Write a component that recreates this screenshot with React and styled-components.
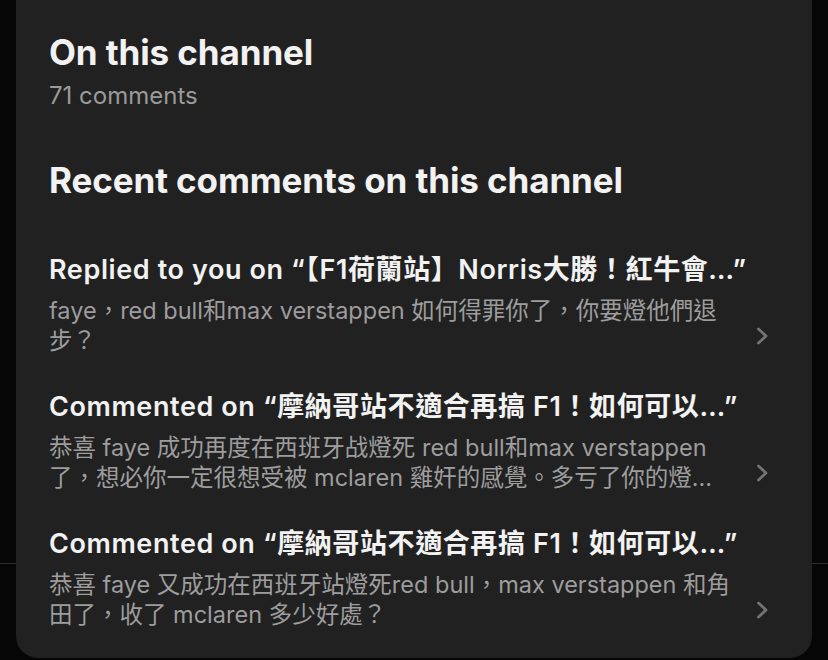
import styled, { createGlobalStyle } from "styled-components";

const GlobalStyle = createGlobalStyle`
  html, body {
    margin: 0;
    padding: 0;
    height: 100%;
    overflow: hidden;
  }
  body {
    background:
      linear-gradient(#2e2e2e, #2e2e2e) 0 563px / 100% 1px no-repeat,
      #060606;
    font-family: Inter, "Noto Sans CJK TC", sans-serif;
    -webkit-font-smoothing: antialiased;
  }
`;

const Sheet = styled.div`
  margin: 0 16px;
  height: 658px;
  box-sizing: border-box;
  background: #212121;
  border-radius: 0 0 22px 22px;
  padding: 32px 42px 0 33px;
  color: #f2f2f2;
`;

const Heading = styled.h2`
  margin: ${(p) => (p.$spaced ? "50px 0 0" : "0")};
  font-size: 35px;
  line-height: 40px;
  font-weight: 700;
  letter-spacing: -0.1px;
`;

const Count = styled.div`
  margin-top: 10px;
  font-size: 24px;
  line-height: 28px;
  color: #9a9a9a;
`;

const List = styled.div`
  margin-top: 54px;
  display: flex;
  flex-direction: column;
  gap: 35px;
`;

const Item = styled.div`
  display: flex;
  flex-direction: column;
  gap: 10px;
`;

const ItemTitle = styled.div`
  font-size: 27px;
  line-height: 32px;
  font-weight: 600;
  letter-spacing: 0.6px;
  white-space: nowrap;
  color: #f2f2f2;
`;

const BodyRow = styled.div`
  display: flex;
  align-items: flex-end;
  gap: 22px;
`;

const BodyText = styled.div`
  flex: 1;
  font-size: 23.5px;
  line-height: 30px;
  color: #9d9d9d;
  display: -webkit-box;
  -webkit-box-orient: vertical;
  -webkit-line-clamp: 2;
  overflow: hidden;
`;

const Chevron = styled.svg`
  flex: none;
  width: 15px;
  height: 20px;
  margin-bottom: 10px;
`;

const comments = [
  {
    title: "Replied to you on “【F1荷蘭站】Norris大勝！紅牛會…”",
    body: "faye，red bull和max verstappen 如何得罪你了，你要燈他們退步？",
  },
  {
    title: "Commented on “摩納哥站不適合再搞 F1！如何可以…”",
    body: "恭喜 faye 成功再度在西班牙战燈死 red bull和max verstappen 了，想必你一定很想受被 mclaren 雞奸的感覺。多亏了你的燈力，讓我們看到了一場精彩的比賽",
  },
  {
    title: "Commented on “摩納哥站不適合再搞 F1！如何可以…”",
    body: "恭喜 faye 又成功在西班牙站燈死red bull，max verstappen 和角田了，收了 mclaren 多少好處？",
  },
];

export default function App() {
  return (
    <>
      <GlobalStyle />
      <Sheet>
        <Heading>On this channel</Heading>
        <Count>71 comments</Count>
        <Heading $spaced>Recent comments on this channel</Heading>
        <List>
          {comments.map((c, i) => (
            <Item key={i}>
              <ItemTitle>{c.title}</ItemTitle>
              <BodyRow>
                <BodyText>{c.body}</BodyText>
                <Chevron viewBox="0 0 15 20" fill="none">
                  <path
                    d="M3.5 3 L11 10 L3.5 17"
                    stroke="#737373"
                    strokeWidth="2.8"
                    strokeLinecap="round"
                    strokeLinejoin="round"
                  />
                </Chevron>
              </BodyRow>
            </Item>
          ))}
        </List>
      </Sheet>
    </>
  );
}
